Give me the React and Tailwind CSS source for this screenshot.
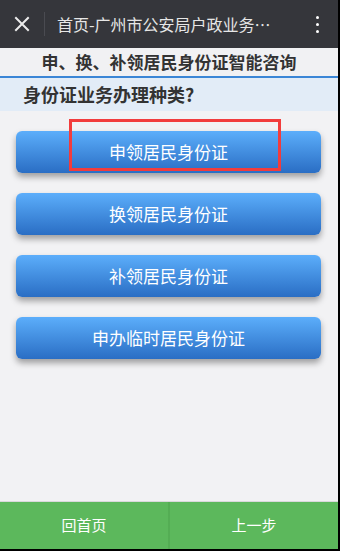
import React from "react";

const font = { fontFamily: '"Noto Sans CJK SC", "Noto Sans", sans-serif' };

function Btn({ children }) {
  return (
    <div className="h-[42px] rounded-[6px] bg-gradient-to-b from-[#5caefb] to-[#2a6ec4] shadow-[0_4px_6px_rgba(0,0,0,0.35)] flex items-center justify-center text-white text-[17px]">
      {children}
    </div>
  );
}

export default function App() {
  return (
    <div className="w-[340px] h-[551px] bg-black relative overflow-hidden" style={font}>
      <div className="w-[338px] h-[549px] flex flex-col bg-[#f2f2f4]">
        {/* header */}
        <div className="h-[48px] bg-[#35363b] flex items-center shrink-0">
          <div className="w-[44px] flex justify-center">
            <svg width="16" height="16" viewBox="0 0 16 16">
              <path d="M2 2 L14 14 M14 2 L2 14" stroke="#ececec" strokeWidth="2" strokeLinecap="square" />
            </svg>
          </div>
          <div className="w-px h-[24px] bg-[#4a4b51]" />
          <div className="ml-[12px] text-[16px] text-[#e6e6e6] whitespace-nowrap">首页-广州市公安局户政业务…</div>
          <div className="ml-auto mr-[19px] flex flex-col gap-[4px]">
            <div className="w-[3px] h-[3px] bg-white rounded-full" />
            <div className="w-[3px] h-[3px] bg-white rounded-full" />
            <div className="w-[3px] h-[3px] bg-white rounded-full" />
          </div>
        </div>
        {/* title */}
        <div className="h-[28px] bg-[#f1f1f3] flex items-center justify-center text-[17px] font-bold text-[#333] shrink-0">
          申、换、补领居民身份证智能咨询
        </div>
        <div className="h-[2px] bg-[#3b86d6] shrink-0" />
        <div className="h-[33px] bg-[#e2ecf7] flex items-center pl-[23px] text-[18px] font-bold text-[#333] shrink-0">
          身份证业务办理种类?
        </div>
        {/* content */}
        <div className="flex-1 flex flex-col gap-[20px] px-[16px] pt-[20px] pr-[17px]">
          <Btn>申领居民身份证</Btn>
          <Btn>换领居民身份证</Btn>
          <Btn>补领居民身份证</Btn>
          <Btn>申办临时居民身份证</Btn>
        </div>
        {/* bottom */}
        <div className="h-px bg-[#d9d9db] shrink-0" />
        <div className="h-[47px] bg-[#5cb85c] flex text-white text-[15px] shrink-0">
          <div className="w-[168px] flex items-center justify-center">回首页</div>
          <div className="w-[2px] bg-[#54ad54]" />
          <div className="flex-1 flex items-center justify-center">上一步</div>
        </div>
      </div>
      <div className="absolute left-[69px] top-[119px] w-[212px] h-[52px] border-[3px] border-[#f23c3c]" />
    </div>
  );
}
